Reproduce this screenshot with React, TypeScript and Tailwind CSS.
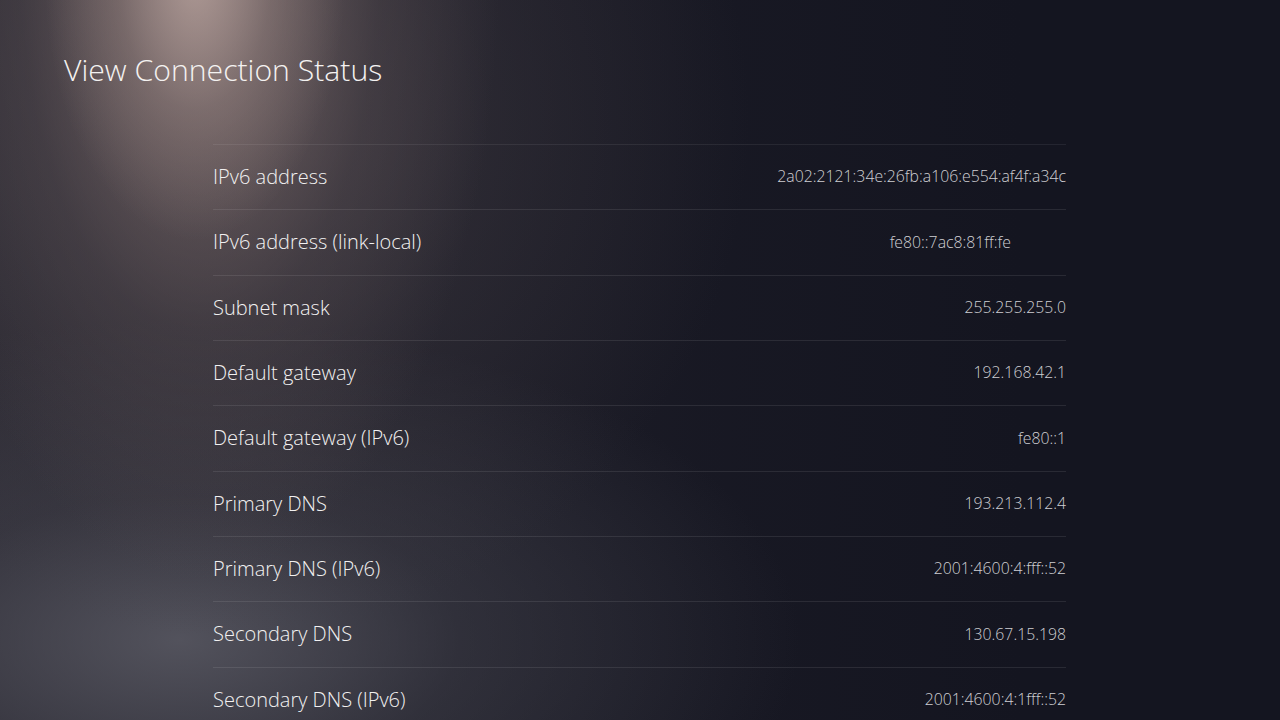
import React from 'react';

type Row = {
  label: string;
  value: string;
  // the link-local value sits a bit left of the others in the reference
  inset?: boolean;
};

const ROWS: Row[] = [
  { label: 'IPv6 address', value: '2a02:2121:34e:26fb:a106:e554:af4f:a34c' },
  { label: 'IPv6 address (link-local)', value: 'fe80::7ac8:81ff:fe', inset: true },
  { label: 'Subnet mask', value: '255.255.255.0' },
  { label: 'Default gateway', value: '192.168.42.1' },
  { label: 'Default gateway (IPv6)', value: 'fe80::1' },
  { label: 'Primary DNS', value: '193.213.112.4' },
  { label: 'Primary DNS (IPv6)', value: '2001:4600:4:fff::52' },
  { label: 'Secondary DNS', value: '130.67.15.198' },
  { label: 'Secondary DNS (IPv6)', value: '2001:4600:4:1fff::52' },
];

const App: React.FC = () => {
  return (
    <div className="relative w-[1280px] h-[720px] overflow-hidden bg-[#141520] font-['Open_Sans','Noto_Sans',sans-serif] text-white">
      {/* Background lighting */}
      <div className="absolute inset-0 bg-[linear-gradient(90deg,rgba(62,58,66,0.5)_0%,rgba(50,47,56,0.45)_25%,rgba(35,34,45,0.25)_55%,rgba(21,22,33,0)_80%)]" />
      <div className="absolute inset-0 bg-[radial-gradient(ellipse_620px_320px_at_180px_640px,rgba(98,98,108,0.75)_0%,rgba(70,70,80,0.45)_45%,rgba(21,22,33,0)_100%)]" />
      <div className="absolute inset-0 bg-[radial-gradient(ellipse_520px_520px_at_230px_120px,rgba(95,84,88,0.5)_0%,rgba(70,64,70,0.3)_50%,rgba(21,22,33,0)_100%)]" />
      <div className="absolute inset-0 bg-[radial-gradient(ellipse_300px_620px_at_200px_-40px,rgba(150,130,128,0.8)_0%,rgba(120,104,104,0.6)_30%,rgba(90,80,84,0.35)_60%,rgba(21,22,33,0)_100%)]" />
      <div className="absolute inset-0 bg-[radial-gradient(ellipse_150px_260px_at_195px_-20px,rgba(190,168,162,0.7)_0%,rgba(160,140,136,0.35)_50%,rgba(21,22,33,0)_100%)]" />

      <div className="relative flex flex-col">
        <h1 className="pl-16 pt-[48px] text-[30.2px] leading-[44px] font-light text-[#f4f2f1]">
          View Connection Status
        </h1>

        <div className="mt-[52px] ml-[213px] w-[853px] border-t border-white/[0.07]">
          {ROWS.map((row) => (
            <div
              key={row.label}
              className="flex h-[65.33px] items-center justify-between border-b border-white/[0.09]"
            >
              <span className="text-[20px] font-light text-[#f2f1f1]">{row.label}</span>
              <span
                className={`text-[15.8px] font-light text-[#cfcfd3] ${row.inset ? 'mr-[55px]' : ''}`}
              >
                {row.value}
              </span>
            </div>
          ))}
        </div>
      </div>
    </div>
  );
};

export default App;
